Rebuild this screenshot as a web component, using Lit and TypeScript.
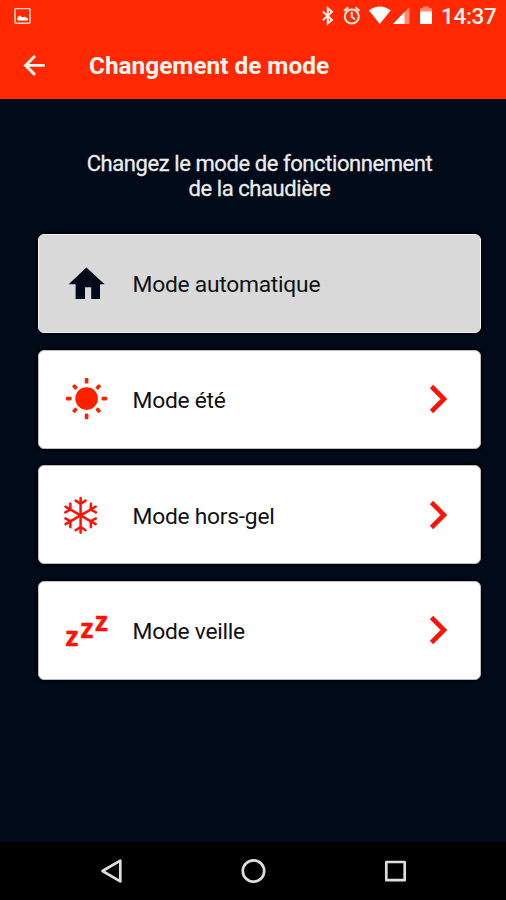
import { LitElement, html, css, svg } from "lit";
import { customElement, property } from "lit/decorators.js";

const SUN_ANGLES = [0, 45, 90, 135, 180, 225, 270, 315];
const FLAKE_ANGLES = [0, 60, 120, 180, 240, 300];

const icons: Record<string, unknown> = {
  home: svg`<path fill="#000a19" d="M23.4 7.6 41.6 24.2H37V39H28.2V27.3H22V39H12.6V24.2H5.6Z"/>`,
  sun: svg`<circle cx="23.6" cy="23.6" r="11.3"/>
    ${SUN_ANGLES.map(
      (a) => svg`<rect x="21.8" y=${a % 90 ? 4.6 : 3} width="3.6" height=${a % 90 ? 5 : 5.6} rx="0.8" transform=${`rotate(${a} 23.6 23.6)`}/>`
    )}`,
  snow: svg`<g fill="none" stroke="#ff1205" stroke-width="2.5" stroke-linecap="round">
    ${FLAKE_ANGLES.map(
      (a) => svg`<path transform=${`rotate(${a} 17.6 24.4)`} d="M17.6 24.4V7M12.6 9.6 17.6 12.8 22.6 9.6"/>`
    )}</g>`,
  sleep: svg`<g class="zzz"><text x="2.4" y="39.8">z</text><text x="17.4" y="32.4">z</text><text x="32.1" y="25">z</text></g>`,
};

@customElement("mode-card")
export class ModeCard extends LitElement {
  @property() icon = "home";
  @property() label = "";
  @property({ type: Boolean, reflect: true }) active = false;

  static styles = css`
    :host {
      display: flex;
      align-items: center;
      box-sizing: border-box;
      height: 99px;
      padding: 0 31px 0 24px;
      border: 1px solid #b9bcc0;
      border-radius: 6px;
      background: #fff;
      box-shadow: 0 0 3px 1px #000;
      color: #111;
    }
    :host([active]) {
      background: #d9d9d9;
      border-color: #f2f2f2;
    }
    .icon {
      width: 48px;
      height: 48px;
      fill: #ff2000;
      overflow: visible;
    }
    .zzz {
      font: 700 26.5px "Open Sans", sans-serif;
      fill: #ff1205;
      stroke: #ff1205;
      stroke-width: 0.4px;
    }
    .label {
      flex: 1;
      margin-left: 21.5px;
      padding-top: 3.8px;
      font-size: 22.8px;
      line-height: 28px;
      letter-spacing: -0.25px;
    }
    .chevron {
      width: 20px;
      height: 32px;
      fill: none;
      stroke: #ff1205;
      stroke-width: 4.6;
    }
  `;

  render() {
    return html`
      <svg class="icon" viewBox="0 0 48 48">${icons[this.icon]}</svg>
      <span class="label">${this.label}</span>
      ${this.active
        ? ""
        : html`<svg class="chevron" viewBox="0 0 20 32"><path d="M2.5 3.5 15 16 2.5 28.5"/></svg>`}
    `;
  }
}

@customElement("app-root")
export class AppRoot extends LitElement {
  static styles = css`
    :host {
      display: flex;
      flex-direction: column;
      height: 900px;
      background: #000a19;
      font-family: Roboto, sans-serif;
      overflow: hidden;
    }
    svg {
      display: block;
      flex: none;
    }
    header {
      height: 98.5px;
      background: #ff2800;
      color: #fff5f0;
    }
    .status {
      display: flex;
      align-items: center;
      justify-content: space-between;
      height: 33px;
      padding: 0 9.5px 0 14px;
    }
    .tray {
      display: flex;
      align-items: center;
    }
    .clock {
      margin-left: 6px;
      font-size: 22.5px;
      font-weight: 500;
      line-height: 33px;
      letter-spacing: -0.3px;
    }
    .bar {
      display: flex;
      align-items: center;
      height: 65px;
      padding-left: 23px;
    }
    h1 {
      margin: 0 0 0 43px;
      font-size: 24.35px;
      font-weight: 700;
      line-height: 30px;
    }
    main {
      flex: 1;
      padding: 52px 25px 0 38px;
    }
    .intro {
      margin: 0 0 33.5px;
      text-align: center;
      font-size: 22px;
      line-height: 25px;
      letter-spacing: -0.42px;
      color: #ececec;
      -webkit-text-stroke: 0.3px currentColor;
    }
    .modes {
      display: grid;
      gap: 16.6px;
    }
    nav {
      display: flex;
      align-items: center;
      justify-content: space-between;
      box-sizing: border-box;
      height: 58.5px;
      padding: 0 98px;
      background: #000;
    }
    .nav-icon {
      fill: none;
      stroke: #dedede;
      stroke-width: 2.7;
      stroke-linejoin: round;
    }
  `;

  render() {
    return html`
      <header>
        <div class="status">
          <svg width="17" height="17" viewBox="0 0 17 17">
            <rect x="1" y="0.6" width="15" height="14.6" rx="1" fill="none" stroke="#ffd9d0" stroke-width="1.5"/>
            <path fill="#fff" d="M3.4 12.6V9.3L6 7.4 8.5 9.5 10.5 8.8 13.8 10.3V12.6Z"/>
          </svg>
          <div class="tray">
            <svg width="114" height="33" viewBox="321 0 114 33">
              <path fill="none" stroke="#ffefe9" stroke-width="2" d="M322.8 11.5 332 20 327.8 23.4V8.2L332 11.8 322.8 20.3"/>
              <g fill="none" stroke="#ffe9e2" stroke-width="2">
                <circle cx="351.8" cy="16.5" r="7"/>
                <path d="M351.8 12V17L355 19.3M344 10.8 348.3 7.4M359.6 10.8 355.3 7.4"/>
              </g>
              <path fill="#fff" d="M368.8 10.2Q379.8 2.6 390.8 10.2L379.8 24Z"/>
              <path fill="#ff8a70" d="M393 24 409.5 7V24Z"/>
              <path fill="#fff" d="M393 24 404.5 12V24Z"/>
              <path fill="#ff8a70" d="M420 8.2H423V6.5H429V8.2H432V12H420Z"/>
              <rect x="420" y="11.5" width="12" height="12.5" fill="#fff"/>
            </svg>
            <span class="clock">14:37</span>
          </div>
        </div>
        <div class="bar">
          <svg width="23" height="22" viewBox="0 0 23 22" fill="none" stroke="#fff5f0" stroke-width="2.9">
            <path d="M21.8 10.4H2.5M12 .9 2.5 10.4 12 19.9"/>
          </svg>
          <h1>Changement de mode</h1>
        </div>
      </header>
      <main>
        <p class="intro">Changez le mode de fonctionnement<br />de la chaudière</p>
        <div class="modes">
          <mode-card icon="home" label="Mode automatique" active></mode-card>
          <mode-card icon="sun" label="Mode été"></mode-card>
          <mode-card icon="snow" label="Mode hors-gel"></mode-card>
          <mode-card icon="sleep" label="Mode veille"></mode-card>
        </div>
      </main>
      <nav>
        <svg class="nav-icon" width="26" height="26" viewBox="0 0 26 26"><path d="M4.5 13 22.3 2.6V23.4Z"/></svg>
        <svg class="nav-icon" width="26" height="26" viewBox="0 0 26 26"><circle cx="13.5" cy="13" r="10.7"/></svg>
        <svg class="nav-icon" width="26" height="26" viewBox="0 0 26 26"><rect x="4.3" y="4" width="18.4" height="18.2"/></svg>
      </nav>
    `;
  }
}
